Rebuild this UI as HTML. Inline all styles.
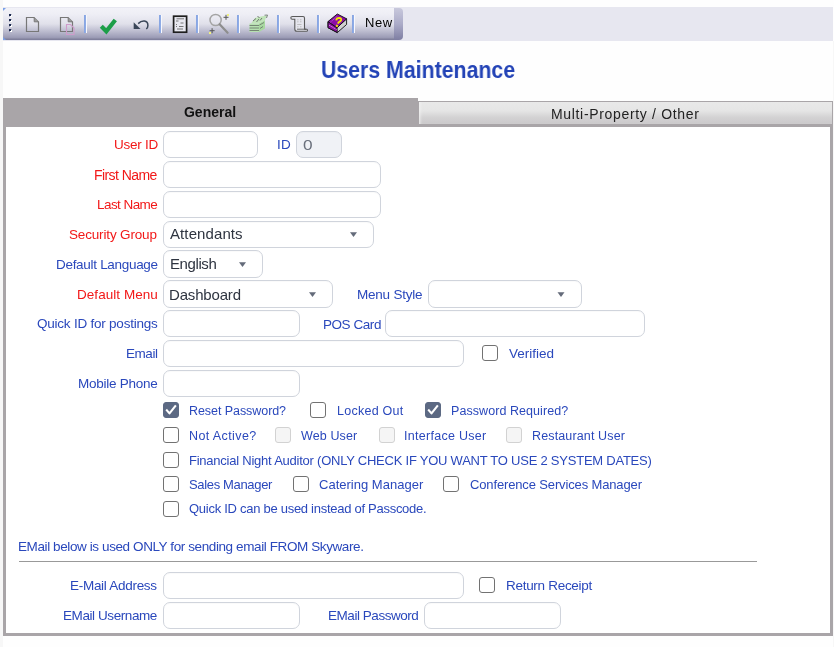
<!DOCTYPE html><html><head><meta charset="utf-8"><title>Users Maintenance</title><style>
*{margin:0;padding:0;box-sizing:border-box}
html,body{width:834px;height:647px;overflow:hidden;background:#fefefe;font-family:"Liberation Sans",sans-serif;position:relative}
.a{position:absolute}
.t{position:absolute;white-space:nowrap;will-change:transform}
.in{position:absolute;border:1px solid #d0d4dc;border-radius:7px;background:#fff;box-shadow:inset 0 1px 1px rgba(0,0,0,0.025)}
.ar{position:absolute;width:0;height:0;border-left:3.5px solid transparent;border-right:3.5px solid transparent;border-top:5px solid #646b7a}
.cb{position:absolute;width:16px;height:16px;border:1.75px solid #727272;border-radius:3px;background:#fff}
.cb.ck{background:#5c6983;border-color:#5c6983}
.cb.ck svg{position:absolute;left:-1.75px;top:-1.75px}
.cb.ds{border:1px solid #d2d2d2;background:#f5f5f5}
.sep{position:absolute;top:15px;width:3px;height:18px;background:linear-gradient(90deg,#86a4e2 0,#92aee6 66.6%,#f8f8fc 66.6%)}
</style></head><body>
<div class="a" style="left:0;top:0;width:3px;height:647px;background:#f7f7f7"></div>
<div class="a" style="left:833px;top:41px;width:1px;height:606px;background:#f7f7f7"></div>
<div class="a" style="left:3px;top:7px;width:830px;height:34px;background:#e7e7f0"></div>
<div class="a" style="left:3px;top:8px;width:392px;height:32px;background:linear-gradient(#f2f2f8 0%,#eeeef5 20%,#e0e0ea 50%,#b8b8cc 75%,#9c9cb6 92%,#84849f 97%,#7c7c9a 100%)"></div>
<div class="a" style="left:394px;top:8px;width:9px;height:32px;border-radius:0 4px 4px 0;background:linear-gradient(#c8c8dc 0%,#ababc8 50%,#7e7ea2 100%)"></div>
<div class="a" style="left:3px;top:8px;width:0;height:0;border-top:3px solid #7aa0e8;border-right:3px solid transparent"></div>
<div class="a" style="left:3px;top:37px;width:0;height:0;border-bottom:3px solid #7aa0e8;border-right:3px solid transparent"></div>
<div class="a" style="left:9px;top:14px;width:2px;height:2px;background:#1c2a50;box-shadow:1px 1px 0 #fff,0.5px 0.5px 0 #1c2a50"></div>
<div class="a" style="left:9px;top:19px;width:2px;height:2px;background:#1c2a50;box-shadow:1px 1px 0 #fff,0.5px 0.5px 0 #1c2a50"></div>
<div class="a" style="left:9px;top:24px;width:2px;height:2px;background:#1c2a50;box-shadow:1px 1px 0 #fff,0.5px 0.5px 0 #1c2a50"></div>
<div class="a" style="left:9px;top:29px;width:2px;height:2px;background:#1c2a50;box-shadow:1px 1px 0 #fff,0.5px 0.5px 0 #1c2a50"></div>
<div class="sep" style="left:84px"></div>
<div class="sep" style="left:159px"></div>
<div class="sep" style="left:196px"></div>
<div class="sep" style="left:237px"></div>
<div class="sep" style="left:277px"></div>
<div class="sep" style="left:317px"></div>
<div class="sep" style="left:352px"></div>

<svg class="a" style="left:24px;top:15px" width="18" height="19" viewBox="0 0 18 19">
 <path d="M2.5 2.5 H10 L14.5 7 V16.5 H2.5 Z" fill="none" stroke="#777" stroke-width="1.2"/>
 <path d="M10.2 2.5 V6.8 H14.5" fill="#9a9a9a" stroke="#7a7a7a" stroke-width="1"/>
</svg>
<svg class="a" style="left:58px;top:15px" width="20" height="21" viewBox="0 0 20 21">
 <path d="M2.5 2.5 H10 L14.5 7 V16.5 H2.5 Z" fill="none" stroke="#777" stroke-width="1.2"/>
 <path d="M10.2 2.5 V6.8 H14.5" fill="#9a9a9a" stroke="#7a7a7a" stroke-width="1"/>
 <path d="M8.5 9.5 H12.5 L16 13 V19.5 H8.5 Z" fill="none" stroke="#cf9ccb" stroke-width="1.1"/>
</svg>
<svg class="a" style="left:98px;top:17px" width="20" height="18" viewBox="0 0 20 18">
 <path d="M3.3 9.3 L8.3 14.3 L17.3 3" fill="none" stroke="#1c9e48" stroke-width="4.2" stroke-linecap="butt" stroke-linejoin="miter"/>
</svg>
<svg class="a" style="left:132px;top:19px" width="18" height="12" viewBox="0 0 18 12">
 <path d="M6.2 4.6 Q 9 1.8 12.4 2.1 Q 15.9 2.6 15.9 6.5 Q 15.9 8.8 14.3 10" fill="none" stroke="#3a4658" stroke-width="1.5"/>
 <path d="M1.7 3.3 L1.7 10 L8.5 10 Z" fill="#3a4658"/>
</svg>
<svg class="a" style="left:172px;top:15px" width="17" height="19" viewBox="0 0 17 19">
 <rect x="1.6" y="1.2" width="13" height="16" fill="#e8e8f0" stroke="#1e1e1e" stroke-width="1.7"/>
 <path d="M4.5 3.8 H12 M4 6 H6.5 M8.5 8 H11.5 M4 9.5 H5 M4 11.5 H5 M7 11.5 H11.5 M5 14 H11" stroke="#6a6a6a" stroke-width="0.9"/>
</svg>
<svg class="a" style="left:207px;top:12px" width="24" height="23" viewBox="0 0 24 23">
 <circle cx="8.6" cy="8" r="5.6" fill="none" stroke="#a4a4a4" stroke-width="1.5"/>
 <path d="M12.6 12.2 L20.6 20.8" stroke="#8e8e8e" stroke-width="2.2" stroke-linecap="round"/>
 <path d="M19 2.8 V7.8 M16.5 5.3 H21.5" stroke="#555" stroke-width="1"/>
 <path d="M5.1 16.2 V21.2 M2.6 18.7 H7.6" stroke="#555" stroke-width="1"/>
 <rect x="20" y="2" width="2" height="2" fill="#f0f080"/>
 <rect x="2" y="20" width="2" height="2" fill="#f0f080"/>
</svg>
<svg class="a" style="left:248px;top:14px" width="21" height="19" viewBox="0 0 21 19">
 <path d="M1.5 9.5 H11 V18 H1.5 Z" fill="#b6e0b0"/>
 <path d="M1.5 11.5 H11 M1.5 14 H11 M1.5 16.5 H11" stroke="#6e7e6e" stroke-width="0.9"/>
 <path d="M11 9.5 L17 6 V14.5 L11 18 Z" fill="#a8d8a0"/>
 <path d="M11.5 11 L16 8.5 M12 14.5 L15 12.5" stroke="#6e7e6e" stroke-width="0.9"/>
 <path d="M3 9.5 L7 4 L13 2.5 L19 1.5 L17 6 L11 9.5 Z" fill="#c0e4b8"/>
 <path d="M5 7 L8 4.5 M8.5 8 L11 5 M12 6.5 L14 4 M9.5 2.5 L11.5 3.5" stroke="#707870" stroke-width="1"/>
 <path d="M16.5 1.2 L19.5 1 L18.5 4" fill="none" stroke="#707870" stroke-width="0.9"/>
</svg>
<svg class="a" style="left:289px;top:14px" width="20" height="19" viewBox="0 0 20 19">
 <path d="M5 2.5 H14 Q15.5 2.5 15.5 4 V15.2 H17.8 Q18.5 15.2 18.5 16.2 Q18.5 17.3 17.5 17.3 H8 Q5.8 17.3 5.8 15 V5.2 H3.2 Q1.8 5.2 1.8 3.8 Q1.8 2.5 3.5 2.5 Z" fill="#e6e6ee" stroke="#5a5a5a" stroke-width="1.1"/>
 <path d="M8.2 5.8 H9.5 M11 5.8 H12.5 M8.2 7.8 H9.5 M11 7.8 H12.5 M8.2 10.5 H12.5 M8.2 12.8 H9.5 M11 12.8 H12.5" stroke="#b8b8b8" stroke-width="0.9"/>
 <path d="M8 15.2 H17" stroke="#5a5a5a" stroke-width="0.9"/>
</svg>
<svg class="a" style="left:326px;top:13px" width="23" height="21" viewBox="0 0 23 21">
 <path d="M2 14.7 L11.3 19.6 L20.6 11.5 L20.6 5.8 L11 14.7 L2 8.6 Z" fill="#d0d0d0" stroke="#111" stroke-width="0.9"/>
 <path d="M2 8.6 L2 14.7 L11.3 19.6 L11 14.7 Z" fill="#8a0aa0" stroke="#111" stroke-width="0.9"/>
 <path d="M3.2 12.2 L10.5 16.5" stroke="#e8c8f0" stroke-width="0.9" stroke-dasharray="1.5 1"/>
 <path d="M2 8.6 L11.3 1 L20.6 5.8 L11 14.7 Z" fill="#8c0ca8" stroke="#111" stroke-width="0.9"/>
 <path d="M4.5 9.2 L10.5 3.8" stroke="#c890d8" stroke-width="0.8" stroke-dasharray="1 0.8"/>
 <path d="M10.2 7.4 Q10.6 4.9 13.2 4.9 Q15.6 5.1 15.1 7.1 Q14.7 8.4 12.6 9.3 L11.9 10.6" fill="none" stroke="#f2e400" stroke-width="1.9"/>
 <rect x="9.9" y="11.9" width="2" height="2" fill="#f2e400" transform="rotate(20 10.9 12.9)"/>
</svg>

<div class="a" style="left:3px;top:98px;width:415px;height:29px;background:#a9a5a8"></div>
<div class="a" style="left:418px;top:101px;width:415px;height:26px;background:#a9a5a8"></div>
<div class="a" style="left:419px;top:102px;width:413px;height:22px;background:linear-gradient(#e9e9e9 0%,#e5e5e5 40%,#d3d2d3 70%,#cbc9cb 100%);box-shadow:inset 3px 0 3px -2px #f2f2f2"></div>
<div class="a" style="left:3px;top:124px;width:830px;height:512px;border:3px solid #a9a5a8;border-top-width:3px;background:#fff"></div>
<div class="a" style="left:6px;top:127px;width:824px;height:506px;background:#fff"></div>
<div class="in" style="left:163px;top:131px;width:95px;height:27px;background:#fff"></div>
<div class="in" style="left:296px;top:131px;width:46px;height:27px;background:#f0f2f6"></div>
<div class="in" style="left:163px;top:161px;width:218px;height:27px;background:#fff"></div>
<div class="in" style="left:163px;top:191px;width:218px;height:27px;background:#fff"></div>
<div class="in" style="left:163px;top:221px;width:211px;height:27px"></div>
<svg class="a" style="left:350px;top:232px" width="9" height="6" viewBox="0 0 9 6"><path d="M0.00 0.2 L7.00 0.2 L3.50 4.9 Z" fill="#646b7a"/></svg>
<div class="in" style="left:163px;top:250px;width:100px;height:28px"></div>
<svg class="a" style="left:239px;top:262px" width="9" height="6" viewBox="0 0 9 6"><path d="M0.00 0.2 L7.00 0.2 L3.50 4.9 Z" fill="#646b7a"/></svg>
<div class="in" style="left:163px;top:280px;width:170px;height:28px"></div>
<svg class="a" style="left:309px;top:292px" width="9" height="6" viewBox="0 0 9 6"><path d="M0.00 0.2 L7.00 0.2 L3.50 4.9 Z" fill="#646b7a"/></svg>
<div class="in" style="left:428px;top:280px;width:154px;height:28px"></div>
<svg class="a" style="left:557px;top:292px" width="9" height="6" viewBox="0 0 9 6"><path d="M0.50 0.2 L7.50 0.2 L4.00 4.9 Z" fill="#646b7a"/></svg>
<div class="in" style="left:163px;top:310px;width:137px;height:27px;background:#fff"></div>
<div class="in" style="left:385px;top:310px;width:260px;height:27px;background:#fff"></div>
<div class="in" style="left:163px;top:340px;width:301px;height:27px;background:#fff"></div>
<div class="cb" style="left:482px;top:345px"></div>
<div class="in" style="left:163px;top:370px;width:137px;height:27px;background:#fff"></div>
<div class="cb ck" style="left:163px;top:402px"><svg width="16" height="16" viewBox="0 0 16 16"><path d="M4.9 9.3 L7.5 12.4 L13.2 5.2" fill="none" stroke="#fff" stroke-width="2.1" stroke-linecap="square" stroke-linejoin="round"/></svg></div>
<div class="cb" style="left:310px;top:402px"></div>
<div class="cb ck" style="left:425px;top:402px"><svg width="16" height="16" viewBox="0 0 16 16"><path d="M4.9 9.3 L7.5 12.4 L13.2 5.2" fill="none" stroke="#fff" stroke-width="2.1" stroke-linecap="square" stroke-linejoin="round"/></svg></div>
<div class="cb" style="left:163px;top:427px"></div>
<div class="cb ds" style="left:275px;top:427px"></div>
<div class="cb ds" style="left:379px;top:427px"></div>
<div class="cb ds" style="left:506px;top:427px"></div>
<div class="cb" style="left:163px;top:452px"></div>
<div class="cb" style="left:163px;top:476px"></div>
<div class="cb" style="left:293px;top:476px"></div>
<div class="cb" style="left:443px;top:476px"></div>
<div class="cb" style="left:163px;top:501px"></div>
<div class="a" style="left:19px;top:561px;width:738px;height:1px;background:#999"></div>
<div class="in" style="left:163px;top:572px;width:301px;height:27px;background:#fff"></div>
<div class="cb" style="left:479px;top:577px"></div>
<div class="in" style="left:163px;top:602px;width:137px;height:27px;background:#fff"></div>
<div class="in" style="left:424px;top:602px;width:137px;height:27px;background:#fff"></div>
<div class="t" style="left:113.50px;top:138.40px;font-size:13.5px;line-height:13.5px;font-weight:400;letter-spacing:-0.250px;color:#f21818">User ID</div>
<div class="t" style="left:93.90px;top:168.05px;font-size:14.0px;line-height:14.0px;font-weight:400;letter-spacing:-0.567px;color:#f21818">First Name</div>
<div class="t" style="left:96.70px;top:197.90px;font-size:13.5px;line-height:13.5px;font-weight:400;letter-spacing:-0.564px;color:#f21818">Last Name</div>
<div class="t" style="left:69.20px;top:227.85px;font-size:13.5px;line-height:13.5px;font-weight:400;letter-spacing:-0.162px;color:#f21818">Security Group</div>
<div class="t" style="left:55.50px;top:257.50px;font-size:13.5px;line-height:13.5px;font-weight:400;letter-spacing:-0.300px;color:#2a48bc">Default Language</div>
<div class="t" style="left:76.50px;top:287.50px;font-size:13.5px;line-height:13.5px;font-weight:400;letter-spacing:0.045px;color:#f21818">Default Menu</div>
<div class="t" style="left:36.50px;top:317.40px;font-size:13.5px;line-height:13.5px;font-weight:400;letter-spacing:-0.225px;color:#2a48bc">Quick ID for postings</div>
<div class="t" style="left:125.60px;top:346.75px;font-size:13.5px;line-height:13.5px;font-weight:400;letter-spacing:-0.450px;color:#2a48bc">Email</div>
<div class="t" style="left:77.60px;top:376.70px;font-size:13.5px;line-height:13.5px;font-weight:400;letter-spacing:-0.255px;color:#2a48bc">Mobile Phone</div>
<div class="t" style="left:277.40px;top:138.40px;font-size:13.5px;line-height:13.5px;font-weight:400;letter-spacing:0.200px;color:#2a48bc">ID</div>
<div class="t" style="left:356.50px;top:287.50px;font-size:13.5px;line-height:13.5px;font-weight:400;letter-spacing:-0.222px;color:#2a48bc">Menu Style</div>
<div class="t" style="left:322.70px;top:317.55px;font-size:13.5px;line-height:13.5px;font-weight:400;letter-spacing:-0.443px;color:#2a48bc">POS Card</div>
<div class="t" style="left:509.00px;top:346.50px;font-size:13.5px;line-height:13.5px;font-weight:400;letter-spacing:0.014px;color:#2a48bc">Verified</div>
<div class="t" style="left:70.00px;top:578.50px;font-size:13.5px;line-height:13.5px;font-weight:400;letter-spacing:-0.284px;color:#2a48bc">E-Mail Address</div>
<div class="t" style="left:62.80px;top:608.50px;font-size:13.5px;line-height:13.5px;font-weight:400;letter-spacing:-0.416px;color:#2a48bc">EMail Username</div>
<div class="t" style="left:506.00px;top:578.55px;font-size:13.5px;line-height:13.5px;font-weight:400;letter-spacing:-0.292px;color:#2a48bc">Return Receipt</div>
<div class="t" style="left:327.60px;top:608.50px;font-size:13.5px;line-height:13.5px;font-weight:400;letter-spacing:-0.454px;color:#2a48bc">EMail Password</div>
<div class="t" style="left:18.00px;top:540.30px;font-size:13.5px;line-height:13.5px;font-weight:400;letter-spacing:-0.400px;color:#2a48bc">EMail below is used ONLY for sending email FROM Skyware.</div>
<div class="t" style="left:189.30px;top:404.90px;font-size:12.5px;line-height:12.5px;font-weight:400;letter-spacing:-0.064px;color:#2a48bc">Reset Password?</div>
<div class="t" style="left:336.80px;top:404.90px;font-size:12.5px;line-height:12.5px;font-weight:400;letter-spacing:0.255px;color:#2a48bc">Locked Out</div>
<div class="t" style="left:451.00px;top:404.90px;font-size:12.5px;line-height:12.5px;font-weight:400;letter-spacing:0.064px;color:#2a48bc">Password Required?</div>
<div class="t" style="left:189.00px;top:429.55px;font-size:12.5px;line-height:12.5px;font-weight:400;letter-spacing:0.400px;color:#2a48bc">Not Active?</div>
<div class="t" style="left:301.40px;top:429.55px;font-size:12.5px;line-height:12.5px;font-weight:400;letter-spacing:0.115px;color:#2a48bc">Web User</div>
<div class="t" style="left:404.40px;top:429.55px;font-size:12.5px;line-height:12.5px;font-weight:400;letter-spacing:0.284px;color:#2a48bc">Interface User</div>
<div class="t" style="left:532.40px;top:429.55px;font-size:12.5px;line-height:12.5px;font-weight:400;letter-spacing:0.135px;color:#2a48bc">Restaurant User</div>
<div class="t" style="left:189.00px;top:453.70px;font-size:13.0px;line-height:13.0px;font-weight:400;letter-spacing:-0.234px;color:#2a48bc">Financial Night Auditor (ONLY CHECK IF YOU WANT TO USE 2 SYSTEM DATES)</div>
<div class="t" style="left:189.00px;top:477.50px;font-size:13.0px;line-height:13.0px;font-weight:400;letter-spacing:-0.341px;color:#2a48bc">Sales Manager</div>
<div class="t" style="left:319.00px;top:477.50px;font-size:13.0px;line-height:13.0px;font-weight:400;letter-spacing:0.014px;color:#2a48bc">Catering Manager</div>
<div class="t" style="left:469.50px;top:477.50px;font-size:13.0px;line-height:13.0px;font-weight:400;letter-spacing:-0.139px;color:#2a48bc">Conference Services Manager</div>
<div class="t" style="left:189.00px;top:502.35px;font-size:13.0px;line-height:13.0px;font-weight:400;letter-spacing:-0.275px;color:#2a48bc">Quick ID can be used instead of Passcode.</div>
<div class="t" style="left:321px;top:59.2px;font-size:23.5px;line-height:23.5px;font-weight:bold;transform:scaleX(0.906);transform-origin:0 0;color:#2343b6">Users Maintenance</div>
<div class="t" style="left:184.00px;top:104.50px;font-size:14.0px;line-height:14.0px;font-weight:700;letter-spacing:-0.017px;color:#111111">General</div>
<div class="t" style="left:551.00px;top:106.67px;font-size:14.0px;line-height:14.0px;font-weight:400;letter-spacing:0.667px;color:#222222">Multi-Property / Other</div>
<div class="t" style="left:364.60px;top:16.30px;font-size:13.0px;line-height:13.0px;font-weight:400;letter-spacing:0.600px;color:#000000">New</div>
<div class="t" style="left:170.20px;top:226.40px;font-size:15.0px;line-height:15.0px;font-weight:400;letter-spacing:0.099px;color:#2e3440">Attendants</div>
<div class="t" style="left:169.60px;top:256.00px;font-size:15.0px;line-height:15.0px;font-weight:400;letter-spacing:-0.400px;color:#2e3440">English</div>
<div class="t" style="left:169.40px;top:286.50px;font-size:15.0px;line-height:15.0px;font-weight:400;letter-spacing:-0.175px;color:#2e3440">Dashboard</div>
<div class="t" style="left:303px;top:137.30px;font-size:15px;line-height:15px;transform:scaleX(1.15);transform-origin:0 0;color:#6a707c">0</div>
</body></html>
